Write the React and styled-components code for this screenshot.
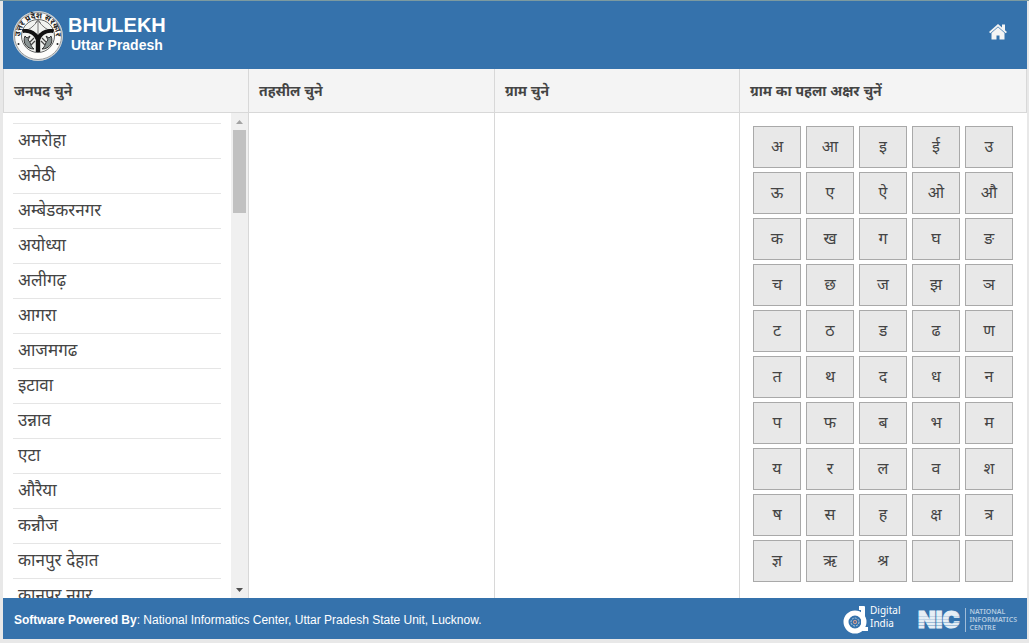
import React from "react";
import styled, { createGlobalStyle } from "styled-components";

const districts = [
  "अमरोहा",
  "अमेठी",
  "अम्बेडकरनगर",
  "अयोध्या",
  "अलीगढ़",
  "आगरा",
  "आजमगढ",
  "इटावा",
  "उन्नाव",
  "एटा",
  "औरैया",
  "कन्नौज",
  "कानपुर देहात",
  "कानपुर नगर",
];

const letters =
  "अ आ इ ई उ ऊ ए ऐ ओ औ क ख ग घ ङ च छ ज झ ञ ट ठ ड ढ ण त थ द ध न प फ ब भ म य र ल व श ष स ह क्ष त्र ज्ञ ऋ श्र"
    .split(" ")
    .concat(["", ""]);

function StateSeal() {
  return (
    <svg width="50" height="50" viewBox="0 0 50 50" role="img" aria-label="Seal">
      <defs>
        <path id="sealArc" d="M8.5 31 A17.6 17.6 0 1 1 41.5 31" />
      </defs>
      <circle cx="25" cy="25" r="24.5" fill="#fdfdfb" stroke="#c9cfd2" />
      <circle cx="25" cy="25" r="23.5" fill="none" stroke="#50565a" strokeWidth="0.6" />
      <circle cx="25" cy="25" r="16.5" fill="#f1f3f0" stroke="#3b3f3f" strokeWidth="0.8" />
      <SealText>
        <textPath href="#sealArc" startOffset="50%" textAnchor="middle">
          उत्तर प्रदेश सरकार
        </textPath>
      </SealText>
      {/* bow and arrow */}
      <path d="M11 20 Q18 19 25 9.5 Q32 19 39 20" fill="none" stroke="#777" strokeWidth="1" />
      <path d="M25 9v16M22.5 12L25 8.5l2.5 3.5" fill="none" stroke="#777" strokeWidth="1" />
      {/* confluence of the rivers */}
      <path
        d="M9 18.500C14 17 21 19 25 24C29 19 36 17 41 18.500L40 22C34 21 29 24 27.200 29V41H22.800V29C21 24 16 21 10 22Z"
        fill="#111"
      />
      {/* pair of fish */}
      <path
        d="M12 25C9 32 14 38 21 38C17 35 18 31 15 29L17 25L14 27Z"
        fill="#899392"
        stroke="#222"
        strokeWidth="0.9"
      />
      <path
        d="M38 25C41 32 36 38 29 38C33 35 32 31 35 29L33 25L36 27Z"
        fill="#899392"
        stroke="#222"
        strokeWidth="0.9"
      />
      <path d="M17 31l4-4M18 34l4-4M33 31l-4-4M32 34l-4-4" stroke="#444" strokeWidth="1.2" />
      <circle cx="5.5" cy="33" r="1" fill="#222" />
      <circle cx="44.5" cy="33" r="1" fill="#222" />
    </svg>
  );
}

function HomeIcon() {
  return (
    <svg width="18" height="16" viewBox="0 0 18 16" aria-hidden="true">
      <path
        d="M9 0L0 8l1.300 1.300L9 2.600l7.700 6.700L18 8l-2-1.800V0.500h-3v3z"
        fill="currentColor"
      />
      <path d="M9 3.200L2.500 9V15.500H7.500V11.500h3v4h5V9z" fill="currentColor" />
    </svg>
  );
}

function DigitalIndiaMark() {
  return (
    <svg width="26" height="30" viewBox="0 0 26 30" aria-hidden="true">
      <circle cx="12" cy="17" r="9" fill="#3572ac" stroke="#fff" strokeWidth="5" />
      <path d="M16 1h5q1 0 1 1v20h3v4H20q-2 0-2-3V5h-2z" fill="#fff" />
      <circle cx="12" cy="17" r="4" fill="none" stroke="#b9cee2" strokeDasharray="2 1" />
      <circle cx="12" cy="17" r="2" fill="#e3a58d" />
      <circle cx="12" cy="17" r="1" fill="#3b5c9c" />
    </svg>
  );
}

function NicMark() {
  return (
    <svg width="46" height="22" viewBox="0 0 46 22" role="img" aria-label="NIC">
      <NicText x="1" y="19">
        NIC
      </NicText>
      <path d="M0 7.5h46M0 10.5h46" stroke="#3572ac" strokeOpacity="0.2" />
      <path d="M0 13.5h46M0 16.5h46" stroke="#3572ac" strokeOpacity="0.4" />
    </svg>
  );
}

function App() {
  return (
    <>
      <GlobalStyle />
      <Page>
        <Header>
          <Brand>
            <StateSeal />
            <BrandText>
              <Title>BHULEKH</Title>
              <SubTitle>Uttar Pradesh</SubTitle>
            </BrandText>
          </Brand>
          <HomeLink href="#" aria-label="Home">
            <HomeIcon />
          </HomeLink>
        </Header>
        <Columns>
          <ColumnTitle>जनपद चुने</ColumnTitle>
          <ColumnTitle>तहसील चुने</ColumnTitle>
          <ColumnTitle>ग्राम चुने</ColumnTitle>
          <ColumnTitle $last>ग्राम का पहला अक्षर चुनें</ColumnTitle>
        </Columns>
        <Body as="main">
          <ListPanel>
            <DistrictList>
              {districts.map((name) => (
                <District key={name}>
                  <DistrictLink href="#">{name}</DistrictLink>
                </District>
              ))}
            </DistrictList>
            <ScrollTrack aria-hidden="true">
              <ScrollArrow>
                <svg width="7" height="4" viewBox="0 0 7 4">
                  <path d="M0 4L3.5 0L7 4z" fill="#a3a3a3" />
                </svg>
              </ScrollArrow>
              <ScrollThumb />
              <ScrollArrow>
                <svg width="7" height="4" viewBox="0 0 7 4">
                  <path d="M0 0L3.5 4L7 0z" fill="#505050" />
                </svg>
              </ScrollArrow>
            </ScrollTrack>
          </ListPanel>
          <Panel />
          <Panel />
          <Panel>
            <Keypad>
              {letters.map((letter, i) => (
                <Key key={i} type="button">
                  {letter}
                </Key>
              ))}
            </Keypad>
          </Panel>
        </Body>
        <Footer>
          <p>
            <strong>Software Powered By</strong>: National Informatics Center, Uttar
            Pradesh State Unit, Lucknow.
          </p>
          <Logos>
            <DigitalIndia>
              <DigitalIndiaMark />
              <DigitalText>
                Digital
                <br />
                India
              </DigitalText>
            </DigitalIndia>
            <Nic>
              <NicMark />
              <NicName>
                NATIONAL
                <br />
                INFORMATICS
                <br />
                CENTRE
              </NicName>
            </Nic>
          </Logos>
        </Footer>
      </Page>
    </>
  );
}

const GlobalStyle = createGlobalStyle`
  * {
    box-sizing: border-box;
  }
  body {
    margin: 0;
    background: #e8e8e8;
    color: #444;
    font-family: "Liberation Sans", "Noto Sans", "Noto Sans Devanagari", sans-serif;
  }
  h1, h2, p, ul {
    margin: 0;
    padding: 0;
  }
`;

const Page = styled.div`
  display: flex;
  flex-direction: column;
  height: 100vh;
  padding: 0 2px 4px 3px;
  border-top: 1px solid #7c9aa0;
`;

const Header = styled.header`
  display: flex;
  flex: none;
  align-items: center;
  justify-content: space-between;
  height: 68px;
  padding: 2px 20px 0 10px;
  background: #3572ac;
  color: #fff;
`;

const Brand = styled.div`
  display: flex;
  align-items: center;
  gap: 5px;
`;

const BrandText = styled.div`
  padding-bottom: 4px;
  text-align: center;
`;

const Title = styled.h1`
  font-size: 20px;
  line-height: 22px;
`;

const SubTitle = styled.p`
  font-size: 14px;
  font-weight: bold;
  line-height: 18px;
`;

const HomeLink = styled.a`
  display: flex;
  color: #f4f4f4;
  padding-bottom: 8px;
`;

const Columns = styled.div`
  display: grid;
  flex: none;
  grid-template-columns: 245fr 246fr 245fr 288fr;
`;

const ColumnTitle = styled.h2`
  height: 44px;
  padding: 0 10px;
  border: solid #d8d8d8;
  border-width: 0 ${(props) => (props.$last ? "1px" : 0)} 1px 1px;
  background: #f4f4f4;
  font-size: 14px;
  line-height: 44px;
`;

const Body = styled(Columns)`
  flex: 1;
  min-height: 0;
  grid-template-rows: minmax(0, 1fr);
  background: #fff;
`;

const Panel = styled.section`
  overflow: hidden;
  border-left: 1px solid #d8d8d8;
`;

const ListPanel = styled.section`
  display: flex;
  overflow: hidden;
`;

const DistrictList = styled.ul`
  flex: 1;
  padding: 10px;
  list-style: none;
`;

const District = styled.li`
  height: 35px;
  border-top: 1px solid #e5e5e5;
`;

const DistrictLink = styled.a`
  display: block;
  padding: 0 5px;
  color: #444;
  font-size: 17px;
  line-height: 34px;
  text-decoration: none;
`;

const ScrollTrack = styled.div`
  display: flex;
  flex-direction: column;
  width: 17px;
  background: #f0f0f0;
`;

const ScrollArrow = styled.div`
  display: flex;
  align-items: center;
  justify-content: center;
  height: 17px;

  &:last-child {
    margin-top: auto;
  }
`;

const ScrollThumb = styled.div`
  height: 83px;
  margin: 0 2px;
  background: #c1c1c1;
`;

const Keypad = styled.div`
  display: grid;
  grid-template-columns: repeat(5, 1fr);
  gap: 4px 5px;
  padding: 13px 14px 13px 13px;
`;

const Key = styled.button`
  height: 42px;
  padding: 0 0 2px;
  border: 1px solid #a9a9a9;
  background: #e8e8e8;
  color: #444;
  font-family: inherit;
  font-size: 16px;
`;

const Footer = styled.footer`
  display: flex;
  flex: none;
  align-items: center;
  justify-content: space-between;
  height: 41px;
  padding: 2px 10px 0 11px;
  background: #3572ac;
  color: #fff;
  font-size: 12px;
`;

const Logos = styled.div`
  display: flex;
  align-items: center;
  gap: 17px;
  font-family: "Noto Sans", sans-serif;
`;

const DigitalIndia = styled.div`
  display: flex;
  align-items: center;
  gap: 1px;
`;

const DigitalText = styled.span`
  font-size: 10px;
  line-height: 13px;
  padding-bottom: 6px;
`;

const Nic = styled.div`
  display: flex;
  align-items: center;
  gap: 2px;
`;

const NicName = styled.span`
  padding-left: 3px;
  border-left: 1px solid #9fbcd8;
  color: #b4cbe0;
  font-size: 7px;
  font-weight: 600;
  line-height: 8px;
`;

const SealText = styled.text`
  fill: #222;
  font-size: 8px;
  font-weight: bold;
`;

const NicText = styled.text`
  fill: #e6eef5;
  stroke: #e6eef5;
  stroke-width: 1px;
  font-family: Inter, sans-serif;
  font-size: 23px;
  font-weight: 900;
`;

export default App;
